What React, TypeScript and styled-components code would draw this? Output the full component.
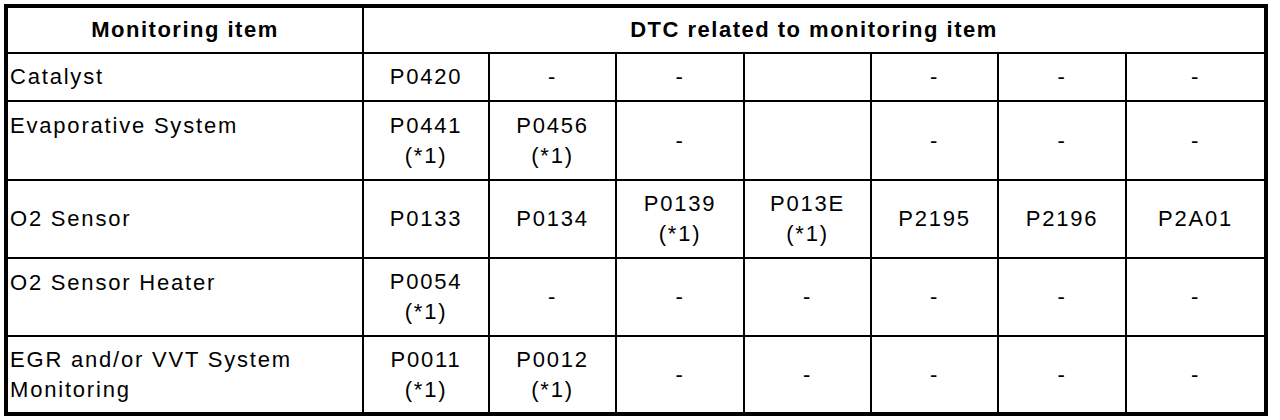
import React from "react";
import styled, { createGlobalStyle } from "styled-components";

const GlobalStyle = createGlobalStyle`
  html, body { margin: 0; padding: 0; background: #ffffff; }
  body { font-family: "Liberation Sans", Arial, sans-serif; color: #000; }
`;

const Page = styled.div`
  padding: 4px;
`;

const Table = styled.div`
  display: inline-grid;
  grid-template-columns: 354px 124px 125px 126px 125px 125px 126px 137px;
  grid-template-rows: 44px 46px 77px 76px 76px 75px;
  gap: 2px;
  padding: 4px;
  background: #000;
`;

const Cell = styled.div<{ $span?: number; $align?: "left" | "center"; $valign?: "top" | "center"; $bold?: boolean; $pad?: number }>`
  background: #fff;
  display: flex;
  flex-direction: column;
  justify-content: ${(p) => (p.$valign === "top" ? "flex-start" : "center")};
  align-items: ${(p) => (p.$align === "left" ? "flex-start" : "center")};
  text-align: ${(p) => (p.$align === "left" ? "left" : "center")};
  grid-column: ${(p) => (p.$span ? `span ${p.$span}` : "auto")};
  padding: ${(p) => (p.$pad ?? 0)}px 0 0 ${(p) => (p.$align === "left" ? 2 : 0)}px;
  font-size: 22px;
  line-height: 30px;
  letter-spacing: ${(p) => (p.$bold ? 1.5 : 1.8)}px;
  font-weight: ${(p) => (p.$bold ? 700 : 400)};
  white-space: nowrap;
`;

type Row = { label: string[]; valign: "top" | "center"; pad?: number; cells: string[][] };

const rows: Row[] = [
  { label: ["Catalyst"], valign: "center", cells: [["P0420"], ["-"], ["-"], [""], ["-"], ["-"], ["-"]] },
  {
    label: ["Evaporative System"],
    valign: "top",
    pad: 9,
    cells: [["P0441", "(*1)"], ["P0456", "(*1)"], ["-"], [""], ["-"], ["-"], ["-"]],
  },
  {
    label: ["O2 Sensor"],
    valign: "center",
    cells: [["P0133"], ["P0134"], ["P0139", "(*1)"], ["P013E", "(*1)"], ["P2195"], ["P2196"], ["P2A01"]],
  },
  {
    label: ["O2 Sensor Heater"],
    valign: "top",
    pad: 9,
    cells: [["P0054", "(*1)"], ["-"], ["-"], ["-"], ["-"], ["-"], ["-"]],
  },
  {
    label: ["EGR and/or VVT System", "Monitoring"],
    valign: "center",
    cells: [["P0011", "(*1)"], ["P0012", "(*1)"], ["-"], ["-"], ["-"], ["-"], ["-"]],
  },
];

export default function App() {
  return (
    <Page>
      <GlobalStyle />
      <Table>
        <Cell $bold>Monitoring item</Cell>
        <Cell $bold $span={7}>DTC related to monitoring item</Cell>
        {rows.map((r, i) => (
          <React.Fragment key={i}>
            <Cell $align="left" $valign={r.valign} $pad={r.pad}>
              {r.label.map((l, j) => (
                <span key={j}>{l}</span>
              ))}
            </Cell>
            {r.cells.map((c, k) => (
              <Cell key={k}>
                {c.map((t, j) => (
                  <span key={j}>{t}</span>
                ))}
              </Cell>
            ))}
          </React.Fragment>
        ))}
      </Table>
    </Page>
  );
}
